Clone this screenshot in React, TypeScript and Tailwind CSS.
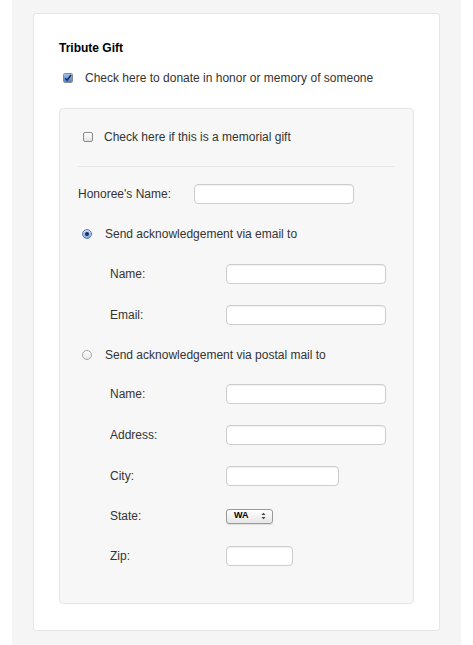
import React from 'react'

function Checkbox({ checked }: { checked?: boolean }) {
  return (
    <span className="inline-flex h-[10px] w-[10px] shrink-0 items-center justify-center rounded-[2px] border border-[#8a8a8a] bg-gradient-to-b from-white to-[#e4e4e4]">
      {checked && (
        <span className="flex h-full w-full items-center justify-center rounded-[1px] bg-gradient-to-b from-[#9fc0ec] to-[#4a7fd0]">
          <svg width="8" height="8" viewBox="0 0 8 8">
            <path d="M1.2 4.2 L3.2 6.2 L7 1" fill="none" stroke="#1c2a44" strokeWidth="1.5" />
          </svg>
        </span>
      )}
    </span>
  )
}

function Radio({ checked }: { checked?: boolean }) {
  return (
    <span
      className={`inline-flex h-[10px] w-[10px] shrink-0 items-center justify-center rounded-full border ${
        checked
          ? 'border-[#5e7fb5] bg-gradient-to-b from-[#c6dbf7] to-[#7ea6e0]'
          : 'border-[#a6a6a6] bg-gradient-to-b from-white to-[#e8e8e8]'
      }`}
    >
      {checked && <span className="h-[4px] w-[4px] rounded-full bg-[#1f2f4d]" />}
    </span>
  )
}

function TextInput({ width }: { width: string }) {
  return (
    <input
      type="text"
      className={`h-[20px] ${width} rounded-[4px] border border-[#cdcdcd] bg-white shadow-[inset_0_1px_1px_rgba(0,0,0,0.06)] outline-none`}
    />
  )
}

function FieldRow({ label, children, className = '' }: { label: string; children: React.ReactNode; className?: string }) {
  return (
    <div className={`flex h-[20px] items-center pl-[32px] ${className}`}>
      <span className="w-[116px] shrink-0">{label}</span>
      {children}
    </div>
  )
}

export default function App() {
  return (
    <div className="min-h-[645px] bg-white text-[12px] text-[#333] [font-family:'Liberation_Sans',Arial,sans-serif]">
      <div className="ml-[12px] min-h-[645px] w-[449px] bg-[#f5f5f5] px-[21px] pt-[13px]">
        <div className="w-[407px] rounded-[3px] border border-[#e6e6e6] bg-white pb-[26px] pl-[25px] pr-[25px] pt-[24px]">
          <div className="flex h-[20px] items-center font-bold text-black">Tribute Gift</div>

          <label className="mt-[10px] flex h-[20px] items-center">
            <span className="ml-[4px] mr-[12px] flex">
              <Checkbox checked />
            </span>
            <span>Check here to donate in honor or memory of someone</span>
          </label>

          <div className="mt-[20px] w-[355px] rounded-[4px] border border-[#e6e6e6] bg-[#f7f7f7] px-[18px] pb-[37px] pt-[18px]">
            <label className="flex h-[20px] items-center">
              <span className="ml-[5px] mr-[11px] flex">
                <Checkbox />
              </span>
              <span>Check here if this is a memorial gift</span>
            </label>

            <div className="mt-[19px] h-px bg-[#e8e8e8]" />

            <div className="mt-[17px] flex h-[20px] items-center">
              <span className="w-[116px] shrink-0">Honoree's Name:</span>
              <TextInput width="w-[160px]" />
            </div>

            <label className="mt-[20px] flex h-[20px] items-center">
              <span className="ml-[4px] mr-[13px] flex">
                <Radio checked />
              </span>
              <span>Send acknowledgement via email to</span>
            </label>

            <FieldRow label="Name:" className="mt-[20px]">
              <TextInput width="w-[160px]" />
            </FieldRow>
            <FieldRow label="Email:" className="mt-[21px]">
              <TextInput width="w-[160px]" />
            </FieldRow>

            <label className="mt-[20px] flex h-[20px] items-center">
              <span className="ml-[4px] mr-[13px] flex">
                <Radio />
              </span>
              <span>Send acknowledgement via postal mail to</span>
            </label>

            <FieldRow label="Name:" className="mt-[19px]">
              <TextInput width="w-[160px]" />
            </FieldRow>
            <FieldRow label="Address:" className="mt-[21px]">
              <TextInput width="w-[160px]" />
            </FieldRow>
            <FieldRow label="City:" className="mt-[21px]">
              <TextInput width="w-[113px]" />
            </FieldRow>
            <FieldRow label="State:" className="mt-[20px]">
              <div className="flex h-[15px] w-[47px] items-center justify-between rounded-[3px] border border-[#9a9a9a] bg-gradient-to-b from-white to-[#e6e6e6] pl-[7px] pr-[6px] text-[9px] font-bold text-black shadow-[0_1px_1px_rgba(0,0,0,0.1)]">
                <span>WA</span>
                <svg width="5" height="8" viewBox="0 0 5 8">
                  <path d="M0.5 3 L2.5 0.8 L4.5 3 Z" fill="#444" />
                  <path d="M0.5 5 L2.5 7.2 L4.5 5 Z" fill="#444" />
                </svg>
              </div>
            </FieldRow>
            <FieldRow label="Zip:" className="mt-[20px]">
              <TextInput width="w-[67px]" />
            </FieldRow>
          </div>
        </div>
      </div>
    </div>
  )
}
